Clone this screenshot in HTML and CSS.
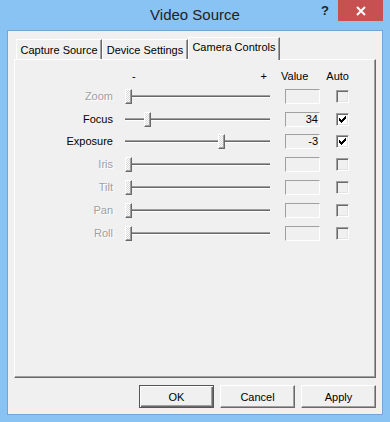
FILE: index.html
```html
<!DOCTYPE html>
<html lang="en">
<head>
  <meta charset="UTF-8">
  <title>Video Source</title>
  <link rel="stylesheet" href="styles.css">
</head>
<body>
  <div class="window">
    <div class="titlebar">
      <span></span>
      <div class="title">Video Source</div>
      <div class="caption-btns">
        <span class="help">?</span>
        <span class="close">
          <svg width="10" height="10" viewBox="0 0 10 10"><path d="M1 1L9 9M9 1L1 9" stroke="#fff" stroke-width="2"/></svg>
        </span>
      </div>
    </div>

    <div class="client">
      <div class="tabs">
        <div class="tab">Capture Source</div>
        <div class="tab tab-wide">Device Settings</div>
        <div class="tab active">Camera Controls</div>
      </div>

      <div class="panel">
        <div class="row head">
          <span class="label"></span>
          <span class="range"><span>-</span><span>+</span></span>
          <span class="head-value">Value</span>
          <span class="head-auto">Auto</span>
        </div>

        <!-- Controls -->
        <div class="row disabled">
          <span class="label">Zoom</span>
          <span class="slider"><span class="track"></span><span class="thumb" style="left: 0px"></span></span>
          <span class="value"></span>
          <span class="check"></span>
        </div>
        <div class="row">
          <span class="label">Focus</span>
          <span class="slider"><span class="track"></span><span class="thumb" style="left: 19px"></span></span>
          <span class="value">34</span>
          <span class="check checked"><svg width="7" height="7" viewBox="0 0 7 7" shape-rendering="crispEdges"><path d="M0 2h1v3h-1zM1 3h1v3h-1zM2 4h1v3h-1zM3 3h1v3h-1zM4 2h1v3h-1zM5 1h1v3h-1zM6 0h1v3h-1z" fill="#000"/></svg></span>
        </div>
        <div class="row">
          <span class="label">Exposure</span>
          <span class="slider"><span class="track"></span><span class="thumb" style="left: 93px"></span></span>
          <span class="value">-3</span>
          <span class="check checked"><svg width="7" height="7" viewBox="0 0 7 7" shape-rendering="crispEdges"><path d="M0 2h1v3h-1zM1 3h1v3h-1zM2 4h1v3h-1zM3 3h1v3h-1zM4 2h1v3h-1zM5 1h1v3h-1zM6 0h1v3h-1z" fill="#000"/></svg></span>
        </div>
        <div class="row disabled">
          <span class="label">Iris</span>
          <span class="slider"><span class="track"></span><span class="thumb" style="left: 0px"></span></span>
          <span class="value"></span>
          <span class="check"></span>
        </div>
        <div class="row disabled">
          <span class="label">Tilt</span>
          <span class="slider"><span class="track"></span><span class="thumb" style="left: 0px"></span></span>
          <span class="value"></span>
          <span class="check"></span>
        </div>
        <div class="row disabled">
          <span class="label">Pan</span>
          <span class="slider"><span class="track"></span><span class="thumb" style="left: 0px"></span></span>
          <span class="value"></span>
          <span class="check"></span>
        </div>
        <div class="row disabled">
          <span class="label">Roll</span>
          <span class="slider"><span class="track"></span><span class="thumb" style="left: 0px"></span></span>
          <span class="value"></span>
          <span class="check"></span>
        </div>
      </div>

      <div class="buttons">
        <button class="btn default">OK</button>
        <button class="btn">Cancel</button>
        <button class="btn">Apply</button>
      </div>
    </div>
  </div>
</body>
</html>
```

FILE: styles.css
```css
* {
  margin: 0;
  padding: 0;
  box-sizing: border-box;
}

body {
  font-family: 'Liberation Sans', Arial, sans-serif;
  font-size: 11px;
  color: #000;
  background-color: #88c3f3;
}

.window {
  width: 390px;
  height: 422px;
  background-color: #88c3f3;
  display: flex;
  flex-direction: column;
}

/* Title bar */
.titlebar {
  height: 30px;
  display: grid;
  grid-template-columns: 1fr auto 1fr;
}

.title {
  font-size: 15px;
  line-height: 30px;
  color: #222;
}

.caption-btns {
  justify-self: end;
  display: flex;
  align-items: flex-start;
  margin-right: 7px;
}

.help {
  width: 26px;
  line-height: 21px;
  text-align: center;
  font-size: 13px;
  font-weight: bold;
  color: #222;
}

.close {
  width: 45px;
  height: 21px;
  background-color: #c75050;
  display: flex;
  align-items: center;
  justify-content: center;
}

/* Client area */
.client {
  flex: 1;
  margin: 0 7px 7px 7px;
  border: 1px solid #6ea6d8;
  background-color: #f0f0f0;
  padding: 6px 6px 0 6px;
}

.tabs {
  display: flex;
  align-items: flex-end;
  height: 22px;
  padding-left: 2px;
}

.tab {
  width: 86px;
  height: 20px;
  border-top: 1px solid #fff;
  border-left: 1px solid #fff;
  border-right: 1px solid #696969;
  box-shadow: inset -1px 0 #a0a0a0;
  padding-top: 2px;
  line-height: 17px;
  text-align: center;
  white-space: nowrap;
}

.tab.active {
  width: 92px;
  height: 23px;
  margin-bottom: -1px;
  padding-top: 1px;
  background-color: #f0f0f0;
  position: relative;
  z-index: 1;
}

.panel {
  height: 319px;
  border-top: 1px solid #fff;
  border-left: 1px solid #fff;
  border-right: 1px solid #696969;
  border-bottom: 1px solid #696969;
  box-shadow: inset -1px -1px #a0a0a0;
}

/* Rows */
.row {
  display: flex;
  align-items: center;
  height: 22.8px;
}

.row.head {
  height: 17px;
  margin-top: 8px;
  line-height: 17px;
}

.label {
  width: 98px;
  text-align: right;
  line-height: 13px;
  flex-shrink: 0;
}

.range {
  width: 145px;
  margin-left: 12px;
  display: flex;
  justify-content: space-between;
  padding: 0 3px 0 7px;
}

.head-value {
  margin-left: 11px;
}

.head-auto {
  margin-left: 18px;
}

.disabled .label {
  color: #a0a0a0;
  text-shadow: 1px 1px 0 #fff;
}

.slider {
  position: relative;
  width: 145px;
  height: 15px;
  margin-left: 12px;
  display: flex;
  align-items: center;
}

.track {
  width: 100%;
  height: 3px;
  border-top: 1px solid #a0a0a0;
  background-color: #696969;
  border-bottom: 1px solid #fff;
}

.thumb {
  position: absolute;
  top: 0;
  width: 7px;
  height: 15px;
  border-top: 1px solid #fff;
  border-left: 1px solid #fff;
  border-right: 1px solid #696969;
  border-bottom: 1px solid #696969;
  box-shadow: inset -1px -1px #a0a0a0;
  background: repeating-conic-gradient(#fff 0 25%, #d8d8d8 0 50%) 0 0 / 2px 2px;
}

.value {
  width: 35px;
  height: 15px;
  margin-left: 15px;
  border-top: 1px solid #a0a0a0;
  border-left: 1px solid #a0a0a0;
  border-bottom: 1px solid #fff;
  border-right: 1px solid #fff;
  text-align: right;
  padding-right: 1px;
  line-height: 13px;
}

.check {
  width: 13px;
  height: 13px;
  margin-left: 16px;
  border-top: 1px solid #a0a0a0;
  border-left: 1px solid #a0a0a0;
  border-bottom: 1px solid #fff;
  border-right: 1px solid #fff;
  box-shadow: inset 1px 1px #696969, inset -1px -1px #e3e3e3;
  background-color: #f0f0f0;
  display: flex;
  align-items: center;
  justify-content: center;
}

.check.checked {
  background-color: #fff;
}

/* Dialog buttons */
.buttons {
  display: flex;
  justify-content: flex-end;
  gap: 6px;
  margin-top: 7px;
}

.btn {
  width: 75px;
  height: 23px;
  font-family: inherit;
  font-size: 11px;
  color: #000;
  background-color: #f0f0f0;
  border-top: 1px solid #fff;
  border-left: 1px solid #fff;
  border-right: 1px solid #696969;
  border-bottom: 1px solid #696969;
  box-shadow: inset -1px -1px #a0a0a0;
}

.btn.default {
  border: 1px solid #555;
  box-shadow: inset 1px 1px #fff, inset -1px -1px #696969, inset -2px -2px #a0a0a0;
}
```
